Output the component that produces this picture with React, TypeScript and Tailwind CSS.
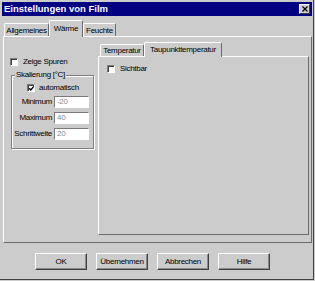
import React from "react";

function CheckBox({ checked }: { checked?: boolean }) {
  return (
    <span className="relative block w-[8px] h-[8px] shrink-0 bg-white border-t border-l border-t-[#7a7a7a] border-l-[#7a7a7a] border-b border-r border-b-white border-r-white shadow-[inset_1px_1px_0_#404040]">
      {checked && (
        <svg className="absolute left-0 top-0" width="7" height="7" viewBox="0 0 7 7">
          <path d="M1.2 3.2 L2.8 4.9 L5.8 1.4" fill="none" stroke="#000" strokeWidth="1.4" />
        </svg>
      )}
    </span>
  );
}

function Tab({ label, width, selected }: { label: string; width: string; selected?: boolean }) {
  return (
    <div
      className={
        selected
          ? `relative z-10 -mb-px h-[17px] ${width} bg-[#cccccc] border-t border-l border-r border-t-white border-l-white border-r-[#6b6b6b] rounded-t-[2px] flex items-start justify-center pt-[3px] leading-[10px]`
          : `${width} h-[13px] bg-[#cccccc] border-t border-l border-r border-t-white border-l-white border-r-[#6b6b6b] rounded-t-[2px] flex items-start justify-center pt-[2px] leading-[10px]`
      }
    >
      {label}
    </div>
  );
}

function SmallTab({ label, width, selected }: { label: string; width: string; selected?: boolean }) {
  return (
    <div
      className={
        selected
          ? `relative z-10 -mb-px h-[15px] ${width} bg-[#cccccc] border-t border-l border-r border-t-white border-l-white border-r-[#6b6b6b] rounded-t-[2px] flex items-start justify-center pt-[2px] leading-[10px]`
          : `${width} h-[12px] bg-[#cccccc] border-t border-l border-r border-t-white border-l-white border-r-[#6b6b6b] rounded-t-[2px] flex items-start justify-center pt-[1px] leading-[10px]`
      }
    >
      {label}
    </div>
  );
}

function Field({ label, value }: { label: string; value: string }) {
  return (
    <div className="flex items-center h-[12px] gap-[2px]">
      <span className="w-[40px] text-right leading-[10px]">{label}</span>
      <span className="w-[35px] h-[12px] bg-white border-t border-l border-t-[#7a7a7a] border-l-[#7a7a7a] border-b border-r border-b-white border-r-white text-[#8c8c8c] pl-[2px] leading-[10px]">
        {value}
      </span>
    </div>
  );
}

function Button({ label }: { label: string }) {
  return (
    <div className="w-[52px] h-[17px] flex items-center justify-center border-t border-l border-t-white border-l-white border-b border-r border-b-[#404040] border-r-[#404040] shadow-[inset_-1px_-1px_0_#8a8a8a] leading-[10px]">
      {label}
    </div>
  );
}

export default function App() {
  return (
    <div className="w-[315px] h-[281px] bg-[#cccccc] overflow-hidden font-['Liberation_Sans',Arial,sans-serif] text-[8px] tracking-[-0.3px] text-black">
      <div className="w-[314px] h-[280px] border-r border-b border-r-[#404040] border-b-[#404040] flex flex-col pt-[2px]">
        {/* Title bar */}
        <div className="ml-[2px] w-[310px] h-[14px] bg-[#000080] flex items-center justify-between pl-[2px] pr-[2px]">
          <span className="text-white font-bold text-[9.5px] tracking-normal leading-[14px]">Einstellungen von Film</span>
          <span className="w-[11px] h-[10px] bg-[#cccccc] border-t border-l border-t-white border-l-white border-b border-r border-b-[#404040] border-r-[#404040] flex items-center justify-center">
            <svg width="6" height="6" viewBox="0 0 6 6">
              <path d="M0.5 0.5 L5.5 5.5 M5.5 0.5 L0.5 5.5" stroke="#000" strokeWidth="1.3" />
            </svg>
          </span>
        </div>

        {/* Outer tabs */}
        <div className="mt-[4px] h-[16px] flex items-end pl-[4px]">
          <Tab label="Allgemeines" width="w-[45px]" />
          <Tab label="Wärme" width="w-[34px]" selected />
          <Tab label="Feuchte" width="w-[33px]" />
        </div>

        {/* Outer panel */}
        <div className="ml-[3px] w-[309px] h-[207px] border-t border-l border-t-white border-l-white border-b border-r border-b-[#6b6b6b] border-r-[#6b6b6b] flex">
          {/* Left column */}
          <div className="w-[94px] flex flex-col">
            <div className="mt-[20px] ml-[6px] h-[10px] flex items-center gap-[5px]">
              <CheckBox />
              <span className="leading-[10px]">Zeige Spuren</span>
            </div>
            <div className="relative mt-[8px] ml-[7px] w-[83px] h-[74px] border border-[#808080] shadow-[inset_1px_1px_0_#ffffff,1px_1px_0_#ffffff] flex flex-col">
              <span className="absolute -top-[6px] left-[3px] bg-[#cccccc] px-[1px] leading-[10px]">Skalierung [°C]</span>
              <div className="mt-[7px] ml-[15px] h-[10px] flex items-center gap-[4px]">
                <CheckBox checked />
                <span className="leading-[10px]">automatisch</span>
              </div>
              <div className="mt-[3px] flex flex-col gap-[4px]">
                <Field label="Minimum" value="-20" />
                <Field label="Maximum" value="40" />
                <Field label="Schrittweite" value="20" />
              </div>
            </div>
          </div>

          {/* Right column: inner tab control */}
          <div className="flex flex-col mt-[5px]">
            <div className="h-[14px] flex items-end pl-[2px]">
              <SmallTab label="Temperatur" width="w-[44px]" />
              <SmallTab label="Taupunkttemperatur" width="w-[78px]" selected />
            </div>
            <div className="w-[211px] h-[179px] border-t border-l border-t-white border-l-white border-b border-r border-b-[#6b6b6b] border-r-[#6b6b6b]">
              <div className="mt-[7px] ml-[8px] h-[10px] flex items-center gap-[5px]">
                <CheckBox />
                <span className="leading-[10px]">Sichtbar</span>
              </div>
            </div>
          </div>
        </div>

        {/* Buttons */}
        <div className="mt-[10px] pl-[35px] flex gap-[9px]">
          <Button label="OK" />
          <Button label="Übernehmen" />
          <Button label="Abbrechen" />
          <Button label="Hilfe" />
        </div>
      </div>
    </div>
  );
}
